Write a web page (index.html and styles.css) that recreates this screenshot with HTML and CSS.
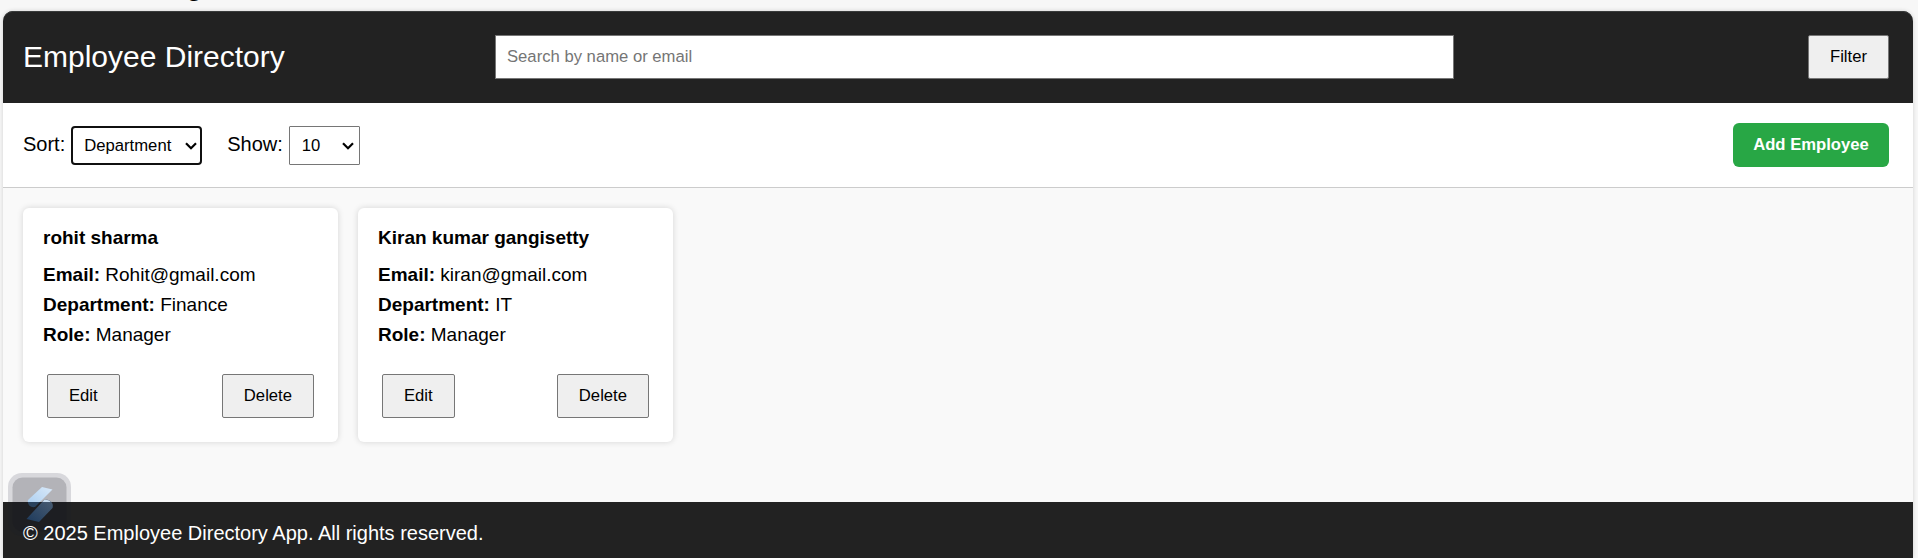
FILE: index.html
```
<!DOCTYPE html>
<html lang="en">
<head>
<meta charset="utf-8">
<title>Employee Directory</title>
<link rel="stylesheet" href="styles.css">
</head>
<body>
<div class="heading-strip"><span class="mark-comma">,</span><span class="mark-g">g</span></div>
<div class="app">
  <header class="header">
    <h1 class="title">Employee Directory</h1>
    <input class="search" type="text" placeholder="Search by name or email">
    <button class="btn">Filter</button>
  </header>
  <section class="toolbar">
    <div class="controls">
      <label class="label">Sort:</label>
      <div class="select select-focus"><span>Department</span><svg class="chevron" viewBox="0 0 12 8"><path d="M1 1.2 6 6.2 11 1.2"/></svg></div>
      <label class="label label-show">Show:</label>
      <div class="select select-small"><span>10</span><svg class="chevron" viewBox="0 0 12 8"><path d="M1 1.2 6 6.2 11 1.2"/></svg></div>
    </div>
    <button class="btn-add">Add Employee</button>
  </section>
  <main class="list">
    <article class="card">
      <h2 class="name">rohit sharma</h2>
      <p class="line"><strong>Email:</strong> Rohit@gmail.com</p>
      <p class="line"><strong>Department:</strong> Finance</p>
      <p class="line"><strong>Role:</strong> Manager</p>
      <div class="actions"><button class="btn">Edit</button><button class="btn">Delete</button></div>
    </article>
    <article class="card">
      <h2 class="name">Kiran kumar gangisetty</h2>
      <p class="line"><strong>Email:</strong> kiran@gmail.com</p>
      <p class="line"><strong>Department:</strong> IT</p>
      <p class="line"><strong>Role:</strong> Manager</p>
      <div class="actions"><button class="btn">Edit</button><button class="btn">Delete</button></div>
    </article>
  </main>
  <footer class="footer"><span class="copyright">© 2025 Employee Directory App. All rights reserved.</span></footer>
</div>
<svg class="widget" viewBox="0 0 64 64">
  <defs>
    <linearGradient id="top" x1="0" y1="1" x2="1" y2="0"><stop offset="0" stop-color="#a9cdf0"/><stop offset="1" stop-color="#d9e9f9"/></linearGradient>
    <linearGradient id="low" x1="0" y1="1" x2="1" y2="0"><stop offset="0" stop-color="#1d3a5c"/><stop offset="1" stop-color="#4a5d73"/></linearGradient>
    <clipPath id="above"><rect width="64" height="29"/></clipPath>
    <clipPath id="below"><rect y="29" width="64" height="35"/></clipPath>
  </defs>
  <g clip-path="url(#above)">
    <rect x="0" y="0" width="63" height="63" rx="14" fill="#d8d8dc"/>
    <rect x="4.500" y="4.500" width="54" height="54" rx="10" fill="#b3b3b8"/>
  </g>
  <g clip-path="url(#below)">
    <rect x="0" y="0" width="63" height="63" rx="14" fill="#202123"/>
    <rect x="4.500" y="4.500" width="54" height="54" rx="10" fill="#1d1e22"/>
  </g>
  <path d="M34 14 44.500 16.500 27 34C22 35 19 31 20 27Z" fill="url(#top)" clip-path="url(#above)"/>
  <path d="M34 14 44.500 16.500 27 34C22 35 19 31 20 27Z" fill="#29425d" clip-path="url(#below)"/>
  <path d="M36 27C42 26 46 30 44.500 35L31 49 18.500 46Z" fill="url(#low)"/>
  <path d="M36 27C39 26.500 41 27.500 43 29H34.500Z" fill="#cbdff2"/>
</svg>
</body>
</html>
```
FILE: styles.css
```
* { box-sizing: border-box; }
body { margin: 0; height: 558px; overflow: hidden; position: relative; background: #f7f7f7; color: #000; font-family: "Liberation Sans", Arial, sans-serif; font-size: 20px; }
.heading-strip { height: 11px; position: relative; overflow: hidden; }
.mark-comma, .mark-g { position: absolute; bottom: 9px; font-size: 30px; line-height: 34px; }
.mark-comma { left: 161px; }
.mark-g { left: 186px; }
.app { width: 1910px; height: 547px; margin-left: 3px; display: flex; flex-direction: column; background: #f9f9f9; border-radius: 10px 10px 0 0; box-shadow: 0 0 4px rgba(0,0,0,.16); }
.header { flex: none; height: 92px; padding: 0 24px 0 20px; display: flex; align-items: center; background: #222; box-shadow: inset 0 1px #393b3b; border-radius: 10px 10px 0 0; color: #fff; }
.title { margin: 0; width: 472px; padding-bottom: 1px; font-size: 30px; font-weight: 400; }
.search { width: 959px; height: 44px; padding: 0 11px; margin: 0 auto 0 0; border: 1px solid #767676; background: #fff; font: 16.67px "Liberation Sans", Arial, sans-serif; outline: 0; }
.search::placeholder { color: #757575; }
.btn { height: 44px; padding: 0 21px; border: 1px solid #767676; border-radius: 2px; background: #efefef; color: #000; font: 16.67px "Liberation Sans", Arial, sans-serif; }
.toolbar { flex: none; height: 85px; padding: 0 24px 0 20px; display: flex; align-items: center; justify-content: space-between; background: #fff; border-bottom: 1px solid #ccc; }
.controls { display: flex; align-items: center; }
.label { margin-right: 6px; padding-bottom: 2px; }
.label-show { margin-left: 25px; }
.select { height: 39px; width: 131px; padding: 1px 5px 0 12px; display: flex; align-items: center; justify-content: space-between; font-size: 16.67px; border: 1px solid #767676; border-radius: 1px; }
.select-focus { border: 2px solid #101010; border-radius: 4px; padding: 1px 3px 0 11px; }
.select-small { width: 71px; }
.chevron { width: 12px; height: 8px; fill: none; stroke: #000; stroke-width: 2.2; }
.btn-add { height: 44px; width: 156px; padding: 0; border: 0; border-radius: 6px; background: #28a745; color: #fff; font: bold 16.67px "Liberation Sans", Arial, sans-serif; }
.list { flex: 1; padding: 20px; display: flex; align-items: flex-start; gap: 20px; }
.card { width: 315px; height: 234px; padding: 19px 20px 20px; background: #fff; border-radius: 6px; box-shadow: 0 0 6px rgba(0,0,0,.15); }
.name { margin: 0 0 11px; font-size: 19px; line-height: 22px; font-weight: 700; }
.line { margin: 0; height: 30px; line-height: 30px; font-size: 19px; }
.actions { display: flex; justify-content: space-between; padding: 24px 4px 0; }
.footer { flex: none; height: 56px; padding: 0 20px; background: #222; color: #fff; line-height: 62px; }
.copyright { position: relative; z-index: 2; }
.widget { position: absolute; left: 8px; top: 473px; width: 64px; height: 64px; }
```
